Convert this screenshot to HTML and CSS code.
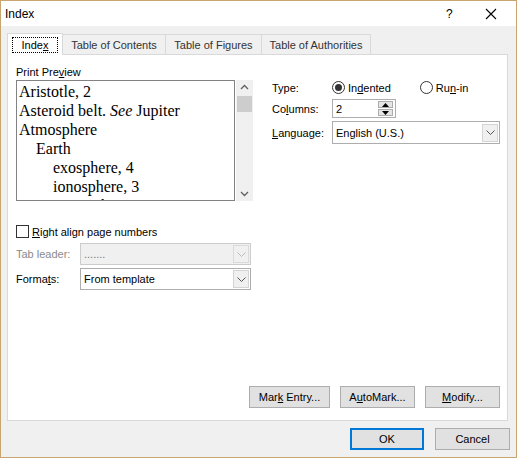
FILE: index.html
```html
<!DOCTYPE html>
<html lang="en">
<head>
    <meta charset="UTF-8">
    <title>Index</title>
    <link rel="stylesheet" href="styles.css">
</head>
<body>
    <div class="dialog">
        <div class="titlebar">
            <span class="title">Index</span>
            <span class="title-help">?</span>
            <svg class="title-close" width="12" height="12" viewBox="0 0 12 12">
                <path d="M1 1 L11 11 M11 1 L1 11" stroke="#000" stroke-width="1.1" fill="none"/>
            </svg>
        </div>

        <div class="content">
            <div class="tabs">
                <div class="tab active"><span class="focus">Inde<u>x</u></span></div>
                <div class="tab tab-toc">Table of Contents</div>
                <div class="tab tab-fig">Table of Figures</div>
                <div class="tab tab-auth">Table of Authorities</div>
            </div>

            <div class="panel">
                <div class="panel-top">
                    <!-- Preview column -->
                    <div class="col-left">
                        <div class="label">Print Pre<u>v</u>iew</div>
                        <div class="preview-row">
                            <div class="preview">
                                <div class="entry">Aristotle, 2</div>
                                <div class="entry">Asteroid belt. <i>See</i> Jupiter</div>
                                <div class="entry">Atmosphere</div>
                                <div class="entry lvl2">Earth</div>
                                <div class="entry lvl3">exosphere, 4</div>
                                <div class="entry lvl3">ionosphere, 3</div>
                                <div class="entry lvl3">mesosphere, 3-4</div>
                            </div>
                            <div class="scrollbar">
                                <svg class="sb-arrow" width="17" height="16" viewBox="0 0 17 16">
                                    <path d="M5 9 L8.5 5.5 L12 9" stroke="#606060" stroke-width="1.3" fill="none"/>
                                </svg>
                                <div class="sb-thumb"></div>
                                <div class="sb-track"></div>
                                <svg class="sb-arrow" width="17" height="16" viewBox="0 0 17 16">
                                    <path d="M5 7 L8.5 10.5 L12 7" stroke="#606060" stroke-width="1.3" fill="none"/>
                                </svg>
                            </div>
                        </div>
                    </div>

                    <!-- Options column -->
                    <div class="col-right">
                        <div class="opt-row row-type">
                            <span class="opt-label">Type:</span>
                            <span class="radio checked"></span>
                            <span class="radio-text">In<u>d</u>ented</span>
                            <span class="radio radio-runin"></span>
                            <span class="radio-text">Ru<u>n</u>-in</span>
                        </div>
                        <div class="opt-row row-columns">
                            <span class="opt-label">Co<u>l</u>umns:</span>
                            <div class="spin">
                                <span class="spin-value">2</span>
                                <div class="spin-buttons">
                                    <div class="spin-btn">
                                        <svg width="7" height="4" viewBox="0 0 7 4"><path d="M0 4 L3.5 0 L7 4 Z" fill="#000"/></svg>
                                    </div>
                                    <div class="spin-btn">
                                        <svg width="7" height="4" viewBox="0 0 7 4"><path d="M0 0 L3.5 4 L7 0 Z" fill="#000"/></svg>
                                    </div>
                                </div>
                            </div>
                        </div>
                        <div class="opt-row row-language">
                            <span class="opt-label"><u>L</u>anguage:</span>
                            <div class="combo combo-lang">
                                <span class="combo-value">English (U.S.)</span>
                                <span class="combo-arrow">
                                    <svg width="9" height="5" viewBox="0 0 9 5"><path d="M0.5 0.5 L4.5 4.5 L8.5 0.5" stroke="#555" stroke-width="1" fill="none"/></svg>
                                </span>
                            </div>
                        </div>
                    </div>
                </div>

                <div class="lower-left">
                    <div class="check-row">
                        <span class="checkbox"></span>
                        <span><u>R</u>ight align page numbers</span>
                    </div>
                    <div class="field-row disabled">
                        <span class="field-label">Tab leader:</span>
                        <div class="combo">
                            <span class="combo-value">.......</span>
                            <span class="combo-arrow">
                                <svg width="9" height="5" viewBox="0 0 9 5"><path d="M0.5 0.5 L4.5 4.5 L8.5 0.5" stroke="#bbb" stroke-width="1" fill="none"/></svg>
                            </span>
                        </div>
                    </div>
                    <div class="field-row">
                        <span class="field-label">Forma<u>t</u>s:</span>
                        <div class="combo">
                            <span class="combo-value">From template</span>
                            <span class="combo-arrow">
                                <svg width="9" height="5" viewBox="0 0 9 5"><path d="M0.5 0.5 L4.5 4.5 L8.5 0.5" stroke="#555" stroke-width="1" fill="none"/></svg>
                            </span>
                        </div>
                    </div>
                </div>

                <div class="panel-buttons">
                    <button class="btn btn-mark">Mar<u>k</u> Entry...</button>
                    <button class="btn">A<u>u</u>toMark...</button>
                    <button class="btn"><u>M</u>odify...</button>
                </div>
            </div>
        </div>

        <div class="footer">
            <button class="btn btn-default">OK</button>
            <button class="btn">Cancel</button>
        </div>
    </div>
</body>
</html>
```

FILE: styles.css
```css
body {
    margin: 0;
    font-family: "Liberation Sans", Arial, sans-serif;
    font-size: 11px;
    color: #000;
    background-color: #f0f0f0;
}

u {
    text-decoration: underline;
    text-underline-offset: 1px;
}

.dialog {
    width: 517px;
    height: 458px;
    box-sizing: border-box;
    border: 1px solid #c9a570;
    background-color: #f0f0f0;
    display: flex;
    flex-direction: column;
}

.titlebar {
    height: 25px;
    background-color: white;
    display: flex;
    align-items: center;
    padding-left: 4px;
    font-size: 12px;
}

.title {
    flex: 1;
}

.title-help {
    width: 10px;
    margin-right: 29px;
    font-size: 12px;
}

.title-close {
    margin-right: 19px;
}

.content {
    padding: 7px 8px 0 6px;
}

/* Tabs */
.tabs {
    display: flex;
    align-items: flex-end;
    height: 21px;
    position: relative;
    z-index: 1;
}

.tab {
    box-sizing: border-box;
    height: 20px;
    border: 1px solid #d9d9d9;
    border-bottom: none;
    margin-left: -1px;
    display: flex;
    align-items: center;
    justify-content: center;
    color: #333;
    padding-top: 1px;
}

.tab.active {
    width: 56px;
    height: 22px;
    margin-left: 0;
    margin-bottom: -1px;
    background-color: white;
    color: #000;
    padding-top: 0;
}

.focus {
    border: 1px dotted #000;
    width: 46px;
    height: 16px;
    box-sizing: border-box;
    text-align: center;
    line-height: 14px;
}

.tab-toc { width: 104px; }
.tab-fig { width: 97px; }
.tab-auth { width: 110px; }

.panel {
    box-sizing: border-box;
    height: 367px;
    background-color: white;
    border: 1px solid #d9d9d9;
    padding: 10px 7px 0 8px;
    display: flex;
    flex-direction: column;
}

.panel-top {
    display: flex;
    align-items: flex-start;
}

.col-left {
    width: 237px;
}

.label {
    height: 14px;
    line-height: 14px;
    margin-bottom: 1px;
}

.preview-row {
    display: flex;
    gap: 1px;
}

.preview {
    box-sizing: border-box;
    width: 219px;
    height: 121px;
    border: 1px solid #828282;
    overflow: hidden;
    padding: 1px 0 0 2px;
    font-family: "Liberation Serif", "Times New Roman", serif;
    font-size: 16px;
    line-height: 19px;
}

.entry {
    white-space: nowrap;
}

.lvl2 { padding-left: 17px; }
.lvl3 { padding-left: 34px; }

.scrollbar {
    width: 17px;
    height: 121px;
    background-color: #f0f0f0;
    display: flex;
    flex-direction: column;
}

.sb-arrow {
    display: block;
}

.sb-thumb {
    height: 16px;
    background-color: #cdcdcd;
    margin: 0 1px;
}

.sb-track {
    flex: 1;
}

/* Options */
.col-right {
    margin-left: 19px;
    margin-top: 14px;
    width: 229px;
}

.opt-row {
    display: flex;
    align-items: center;
}

.row-type { height: 17px; }
.row-columns { height: 19px; margin-top: 3px; }
.row-language { height: 23px; margin-top: 3px; }

.opt-label {
    width: 60px;
}

.radio {
    box-sizing: border-box;
    width: 13px;
    height: 13px;
    border: 1px solid #333;
    border-radius: 50%;
    background-color: white;
    position: relative;
}

.radio.checked::after {
    content: "";
    position: absolute;
    left: 2px;
    top: 2px;
    width: 7px;
    height: 7px;
    border-radius: 50%;
    background-color: #333;
}

.radio-text {
    margin-left: 3px;
}

.radio-runin {
    margin-left: 29px;
}

.spin {
    box-sizing: border-box;
    width: 64px;
    height: 19px;
    border: 1px solid #adadad;
    display: flex;
    align-items: center;
    justify-content: space-between;
    padding-left: 3px;
    padding-right: 2px;
}

.spin-buttons {
    display: flex;
    flex-direction: column;
    gap: 1px;
}

.spin-btn {
    box-sizing: border-box;
    width: 15px;
    height: 7px;
    background-color: #e5e5e5;
    border: 1px solid #adadad;
    display: flex;
    align-items: center;
    justify-content: center;
}

.spin-btn svg {
    display: block;
}

.combo {
    box-sizing: border-box;
    height: 22px;
    border: 1px solid #adadad;
    background-color: white;
    display: flex;
    align-items: center;
    padding-left: 3px;
    padding-right: 1px;
    flex: 1;
}

.combo-lang {
    height: 23px;
}

.combo-value {
    flex: 1;
}

.combo-arrow {
    box-sizing: border-box;
    width: 16px;
    height: 18px;
    background-color: #f0f0f0;
    border: 1px solid #d4d4d4;
    display: flex;
    align-items: center;
    justify-content: center;
}

/* Lower left */
.lower-left {
    width: 235px;
    margin-top: 24px;
}

.check-row {
    display: flex;
    align-items: center;
    height: 13px;
}

.checkbox {
    box-sizing: border-box;
    width: 13px;
    height: 13px;
    border: 1px solid #333;
    background-color: white;
    margin-right: 3px;
}

.field-row {
    display: flex;
    align-items: center;
    margin-top: 3px;
}

.check-row + .field-row {
    margin-top: 5px;
}

.field-label {
    width: 64px;
}

.field-row.disabled {
    color: #8a8a8a;
}

.field-row.disabled .combo {
    background-color: #f0f0f0;
    border-color: #cccccc;
    color: #777;
}

.field-row.disabled .combo-arrow {
    background-color: #f0f0f0;
    border-color: #dadada;
}

/* Buttons */
.panel-buttons {
    margin-top: auto;
    margin-bottom: 12px;
    display: flex;
    justify-content: flex-end;
    gap: 10px;
}

.btn {
    box-sizing: border-box;
    width: 75px;
    height: 22px;
    background-color: #e1e1e1;
    border: 1px solid #adadad;
    font-family: "Liberation Sans", Arial, sans-serif;
    font-size: 11px;
    color: #000;
    padding: 0;
}

.btn-mark {
    width: 81px;
}

.footer {
    display: flex;
    justify-content: flex-end;
    gap: 11px;
    padding: 7px 6px 0 0;
}

.btn-default {
    width: 74px;
    border: 2px solid #0078d7;
}
```
